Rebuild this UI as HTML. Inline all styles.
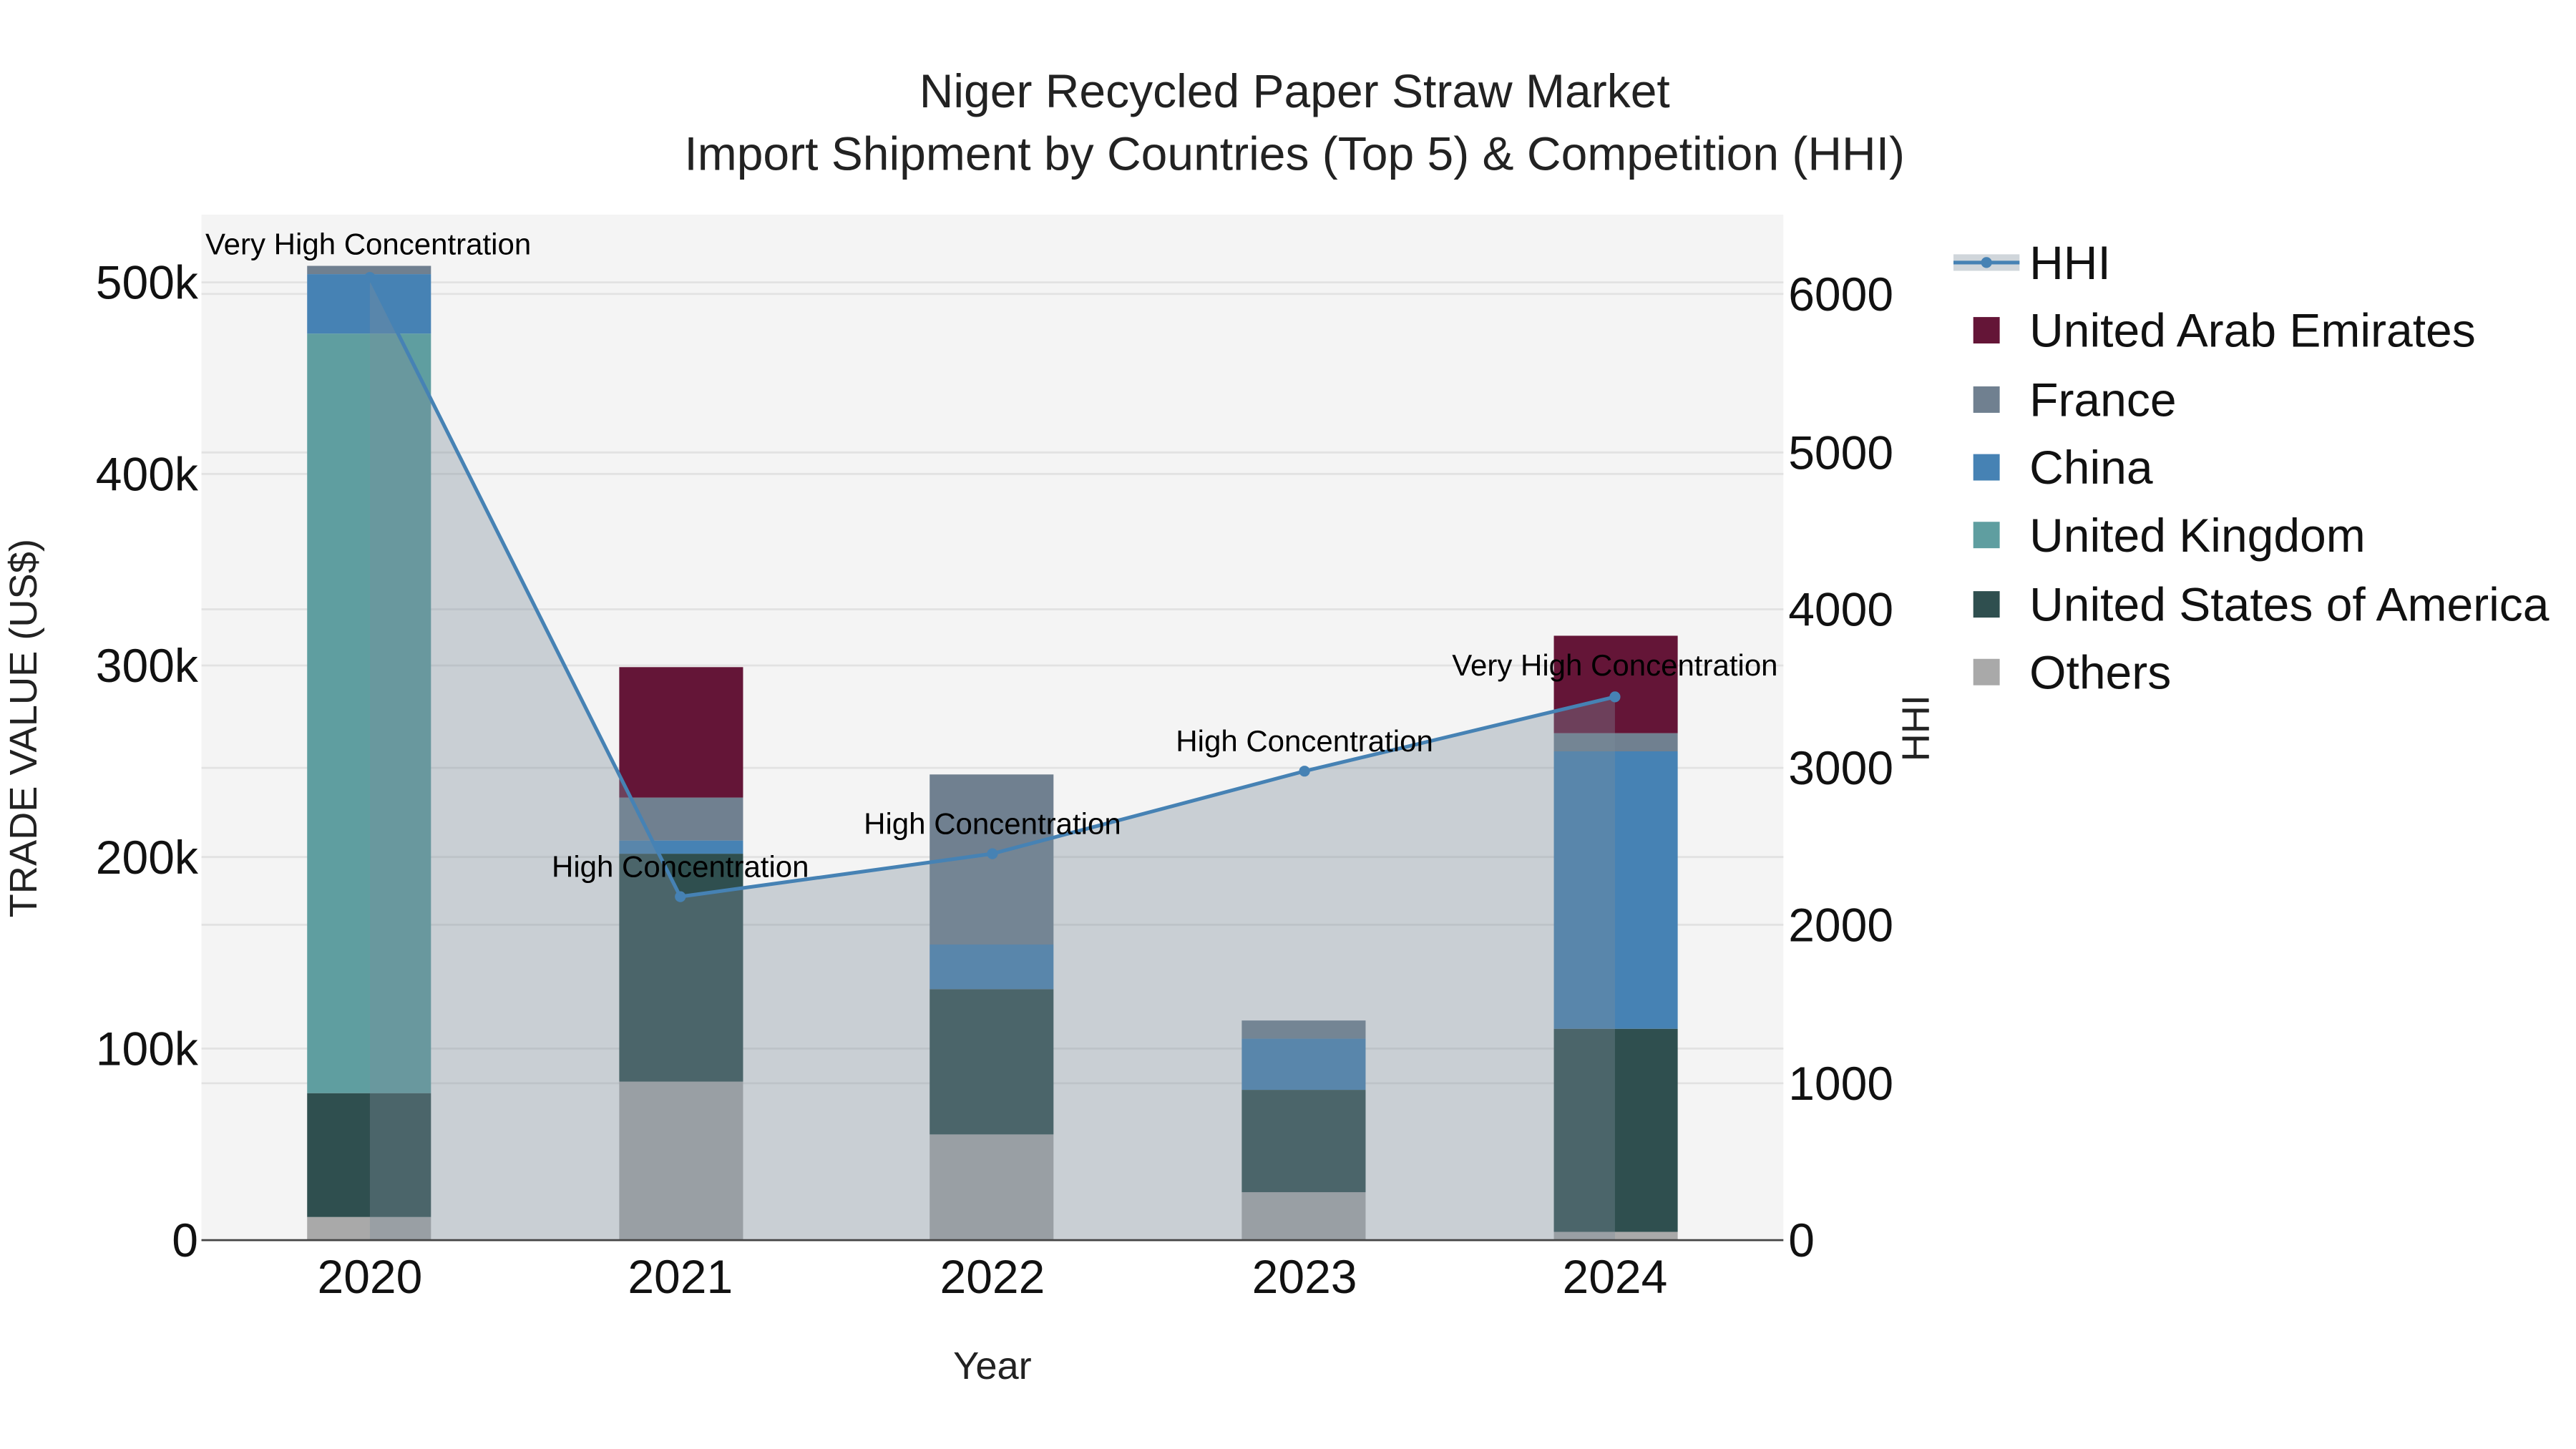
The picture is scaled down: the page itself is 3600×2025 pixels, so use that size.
<!DOCTYPE html>
<html><head><meta charset="utf-8"><style>
html,body{margin:0;padding:0;background:#fff;}
svg{display:block;}
text{font-family:"Liberation Sans",Arial,sans-serif;}
</style></head><body>
<svg width="3600" height="2025" viewBox="0 0 1560 877.5" xmlns="http://www.w3.org/2000/svg">
<rect width="1560" height="877.5" fill="#fff"/>
<rect x="122" y="130" width="958" height="621" fill="#f4f4f4"/>
<g stroke="#e2e2e2" stroke-width="1.2">
<line x1="122" x2="1080" y1="635" y2="635"/><line x1="122" x2="1080" y1="519" y2="519"/><line x1="122" x2="1080" y1="403" y2="403"/><line x1="122" x2="1080" y1="287" y2="287"/><line x1="122" x2="1080" y1="171" y2="171"/>
<line x1="122" x2="1080" y1="656" y2="656"/><line x1="122" x2="1080" y1="560" y2="560"/><line x1="122" x2="1080" y1="465" y2="465"/><line x1="122" x2="1080" y1="369" y2="369"/><line x1="122" x2="1080" y1="274" y2="274"/><line x1="122" x2="1080" y1="178" y2="178"/>
</g>
<g>
<rect x="186" y="737" width="75" height="14" fill="#a9a9a9"/>
<rect x="186" y="662" width="75" height="75" fill="#2f4f4f"/>
<rect x="186" y="202" width="75" height="460" fill="#5f9ea0"/>
<rect x="186" y="166" width="75" height="36" fill="#4682b4"/>
<rect x="186" y="161" width="75" height="5" fill="#708090"/>

<rect x="375" y="655" width="75" height="96" fill="#a9a9a9"/>
<rect x="375" y="517" width="75" height="138" fill="#2f4f4f"/>
<rect x="375" y="509" width="75" height="8" fill="#4682b4"/>
<rect x="375" y="483" width="75" height="26" fill="#708090"/>
<rect x="375" y="404" width="75" height="79" fill="#641537"/>

<rect x="563" y="687" width="75" height="64" fill="#a9a9a9"/>
<rect x="563" y="599" width="75" height="88" fill="#2f4f4f"/>
<rect x="563" y="572" width="75" height="27" fill="#4682b4"/>
<rect x="563" y="469" width="75" height="103" fill="#708090"/>

<rect x="752" y="722" width="75" height="29" fill="#a9a9a9"/>
<rect x="752" y="660" width="75" height="62" fill="#2f4f4f"/>
<rect x="752" y="629" width="75" height="31" fill="#4682b4"/>
<rect x="752" y="618" width="75" height="11" fill="#708090"/>

<rect x="941" y="746" width="75" height="5" fill="#a9a9a9"/>
<rect x="941" y="623" width="75" height="123" fill="#2f4f4f"/>
<rect x="941" y="455" width="75" height="168" fill="#4682b4"/>
<rect x="941" y="444" width="75" height="11" fill="#708090"/>
<rect x="941" y="385" width="75" height="59" fill="#641537"/>
</g>
<polygon points="224,168 412,543 601,517 790,467 978,422 978,751 224,751" fill="rgb(125,140,155)" fill-opacity="0.36"/>
<polyline points="224,168 412,543 601,517 790,467 978,422" fill="none" stroke="#4682b4" stroke-width="2.2"/>
<g fill="#4682b4"><circle cx="224" cy="168" r="3.3"/><circle cx="412" cy="543" r="3.3"/><circle cx="601" cy="517" r="3.3"/><circle cx="790" cy="467" r="3.3"/><circle cx="978" cy="422" r="3.3"/></g>
<line x1="122" x2="1080" y1="751" y2="751" stroke="#444" stroke-width="1.2"/>
<g font-size="18.2" fill="#000" text-anchor="middle">
<text x="223" y="154">Very High Concentration</text>
<text x="412" y="531">High Concentration</text>
<text x="601" y="505">High Concentration</text>
<text x="790" y="455">High Concentration</text>
<text x="978" y="409">Very High Concentration</text>
</g>
<g font-size="28.6" fill="#222" text-anchor="middle">
<text x="784" y="65">Niger Recycled Paper Straw Market</text>
<text x="784" y="103">Import Shipment by Countries (Top 5) &amp; Competition (HHI)</text>
</g>
<g font-size="28.6" fill="#111" text-anchor="end">
<text x="120" y="761">0</text><text x="120" y="645">100k</text><text x="120" y="529">200k</text><text x="120" y="413">300k</text><text x="120" y="297">400k</text><text x="120" y="181">500k</text>
</g>
<g font-size="28.6" fill="#111" text-anchor="start">
<text x="1083" y="761">0</text><text x="1083" y="666">1000</text><text x="1083" y="570">2000</text><text x="1083" y="475">3000</text><text x="1083" y="379">4000</text><text x="1083" y="284">5000</text><text x="1083" y="188">6000</text>
</g>
<g font-size="28.6" fill="#111" text-anchor="middle">
<text x="224" y="783">2020</text><text x="412" y="783">2021</text><text x="601" y="783">2022</text><text x="790" y="783">2023</text><text x="978" y="783">2024</text>
</g>
<text x="601" y="835" font-size="23.5" fill="#222" text-anchor="middle">Year</text>
<text transform="translate(22,441) rotate(-90)" font-size="23.5" fill="#222" text-anchor="middle">TRADE VALUE (US$)</text>
<text transform="translate(1168,441) rotate(-90)" font-size="23.5" fill="#222" text-anchor="middle">HHI</text>
<rect x="1183" y="154" width="40" height="10" fill="rgb(125,140,155)" fill-opacity="0.36"/>
<line x1="1183" x2="1223" y1="159" y2="159" stroke="#4682b4" stroke-width="2.2"/>
<circle cx="1203" cy="159" r="3.3" fill="#4682b4"/>
<rect x="1195" y="192" width="16" height="16" fill="#641537"/>
<rect x="1195" y="234" width="16" height="16" fill="#708090"/>
<rect x="1195" y="275" width="16" height="16" fill="#4682b4"/>
<rect x="1195" y="316" width="16" height="16" fill="#5f9ea0"/>
<rect x="1195" y="358" width="16" height="16" fill="#2f4f4f"/>
<rect x="1195" y="399" width="16" height="16" fill="#a9a9a9"/>
<g font-size="28.6" fill="#111">
<text x="1229" y="169">HHI</text>
<text x="1229" y="210">United Arab Emirates</text>
<text x="1229" y="252">France</text>
<text x="1229" y="293">China</text>
<text x="1229" y="334">United Kingdom</text>
<text x="1229" y="376">United States of America</text>
<text x="1229" y="417">Others</text>
</g>
</svg>
</body></html>
